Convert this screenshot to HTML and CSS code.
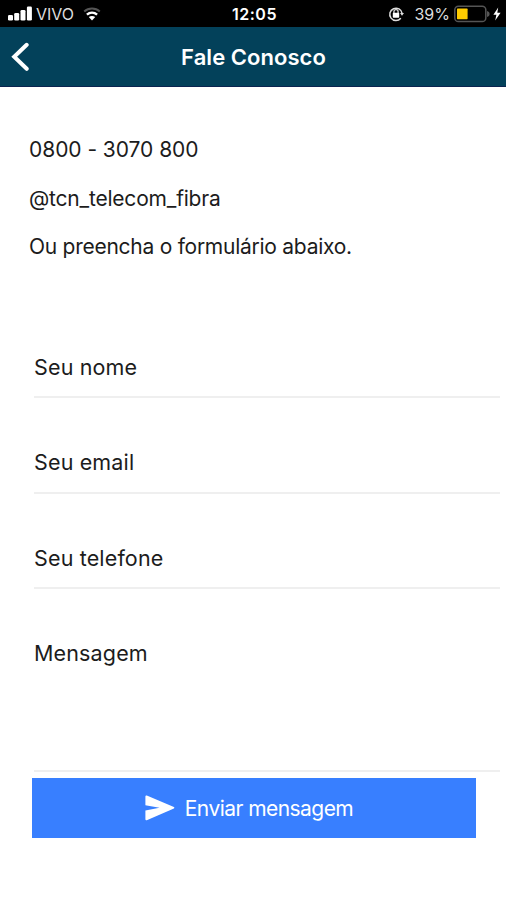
FILE: index.html
```html
<!DOCTYPE html>
<html lang="pt-BR">
<head>
    <meta charset="UTF-8">
    <meta name="viewport" content="width=device-width, initial-scale=1.0">
    <title>Fale Conosco</title>
    <link rel="stylesheet" href="styles.css">
</head>
<body>
    <div class="status-bar">
        <div class="status-left">
            <svg class="signal" width="24" height="16" viewBox="0 0 24 16" fill="#fff">
                <rect x="0" y="9" width="5" height="5.5" rx="1.3"/>
                <rect x="6.2" y="7" width="5" height="7.5" rx="1.3"/>
                <rect x="12.5" y="4" width="5" height="10.5" rx="1.3"/>
                <rect x="18.9" y="0.5" width="5" height="14" rx="1.3"/>
            </svg>
            <span class="carrier">VIVO</span>
            <svg class="wifi" width="18" height="14" viewBox="0 0 18 14" fill="none">
                <path d="M1.2 4.6C5.7 0.6 12.3 0.6 16.8 4.6" stroke="#555" stroke-width="2"/>
                <path d="M3.9 7.6C6.9 5 11.1 5 14.1 7.6" stroke="#fff" stroke-width="2.4"/>
                <path d="M5.8 10.1C7.7 8.5 10.3 8.5 12.2 10.1L9 13.5Z" fill="#fff"/>
            </svg>
        </div>
        <span class="time">12:05</span>
        <div class="status-right">
            <svg class="lock" width="16" height="16" viewBox="0 0 16 16" fill="none" stroke="#ddd">
                <path d="M12.8 12.3A6.2 6.2 0 1 1 14.1 7.4" stroke-width="1.5"/>
                <path d="M12 7H16L14 9.8Z" fill="#ddd" stroke="none"/>
                <path d="M5.9 8V5.8A2.1 2.1 0 0 1 10.1 5.8V8" stroke-width="1.3"/>
                <rect x="4.8" y="6.8" width="6.4" height="5" rx="0.7" fill="#fff" stroke="none"/>
            </svg>
            <span class="percent">39%</span>
            <svg class="battery" width="36" height="18" viewBox="0 0 36 18" fill="none">
                <rect x="0.8" y="1.2" width="31" height="15.4" rx="3.6" stroke="#555" stroke-width="1.5"/>
                <path d="M33 6V12Q35.7 11.3 35.7 9Q35.7 6.7 33 6Z" fill="#555"/>
                <rect x="3" y="3.6" width="10.6" height="10.6" rx="0.6" fill="#ffcc00"/>
            </svg>
            <svg class="bolt" width="8" height="14" viewBox="0 0 8 14" fill="#fff">
                <path d="M5.2 0.5L0.4 7.8H3.4L2.2 13.5L7.6 5.8H4.3Z"/>
            </svg>
        </div>
    </div>

    <header class="header">
        <a class="back" href="#">
            <svg width="20" height="30" viewBox="0 0 20 30" fill="none" stroke="#fff" stroke-width="4" stroke-linecap="round">
                <path d="M16.7 2.8L4.2 14.8L16.7 26.8"/>
            </svg>
        </a>
        <h1>Fale Conosco</h1>
    </header>

    <main class="content">
        <div class="contact">
            <p class="phone">0800 - 3070 800</p>
            <p class="social">@tcn_telecom_fibra</p>
            <p class="hint">Ou preencha o formulário abaixo.</p>
        </div>

        <form class="form">
            <div class="field" contenteditable="true">Seu nome</div>
            <div class="field" contenteditable="true">Seu email</div>
            <div class="field" contenteditable="true">Seu telefone</div>
            <div class="field mensagem" contenteditable="true">Mensagem</div>
            <button class="send" type="button">
                <svg width="30" height="26" viewBox="0 0 30 26" fill="#fff">
                    <path d="M1.8 0.5L28.9 11.9Q30 12.7 28.9 13.5L1.8 25.2Q0.4 25.5 0.4 24.2V15.6L14.5 12.8L0.4 10.2V1.6Q0.4 0.2 1.8 0.5Z"/>
                </svg>
                <span>Enviar mensagem</span>
            </button>
        </form>
    </main>
</body>
</html>
```

FILE: styles.css
```css
* {
    margin: 0;
    padding: 0;
    box-sizing: border-box;
    font-family: Inter, "Liberation Sans", sans-serif;
}

body {
    background: #fff;
    min-height: 100vh;
    color: #1c1c1c;
}

.status-bar {
    display: grid;
    grid-template-columns: 1fr auto 1fr;
    align-items: center;
    height: 27px;
    padding: 1px 5px 0 8px;
    background: #000;
    color: #fff;
}

.status-left,
.status-right {
    display: flex;
    align-items: center;
}

.status-right {
    justify-content: flex-end;
}

.carrier {
    margin-left: 4px;
    font-size: 16px;
    color: #ddd;
}

.wifi {
    margin-left: 9px;
}

.time {
    font-size: 16px;
    font-weight: 600;
    letter-spacing: 0.5px;
}

.percent {
    margin: 0 4px 0 10px;
    font-size: 16px;
    color: #ddd;
}

.bolt {
    margin-left: 3px;
}

.header {
    display: grid;
    grid-template-columns: 40px 1fr 40px;
    align-items: center;
    height: 60px;
    padding-top: 1px;
    background: #03415a;
    border-bottom: 1px solid #0b2450;
    color: #fff;
}

.back {
    height: 30px;
    padding-left: 10px;
}

.header h1 {
    padding-left: 1px;
    text-align: center;
    font-size: 22px;
    font-weight: 600;
    letter-spacing: 0.05px;
}

.contact {
    padding: 50px 29px 0;
    font-size: 21px;
    line-height: 25px;
}

.contact p {
    margin-bottom: 23.5px;
}

.phone {
    letter-spacing: -0.05px;
}

.social {
    letter-spacing: -0.2px;
}

.hint {
    letter-spacing: -0.26px;
}

.form {
    padding: 20.5px 6px 0 34px;
}

.field {
    height: 95.3px;
    padding-top: 52px;
    border-bottom: 2px solid #efefef;
    font-size: 21.5px;
    line-height: 25px;
    letter-spacing: 0.15px;
    outline: none;
}

.mensagem {
    height: 183px;
}

.send {
    display: flex;
    justify-content: center;
    align-items: center;
    gap: 10px;
    width: 444px;
    height: 60px;
    margin: 6px 0 0 -2px;
    padding-right: 10px;
    border: none;
    background: #387fff;
    color: #fff;
    font-size: 21px;
    letter-spacing: -0.55px;
    cursor: pointer;
}

.send span {
    padding-top: 2px;
}
```
